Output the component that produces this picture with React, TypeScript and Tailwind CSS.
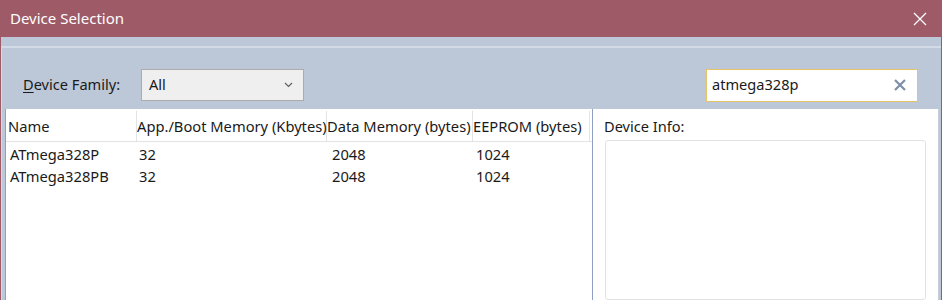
import React from "react";

const font = { fontFamily: '"Noto Sans", "Open Sans", sans-serif' };

export default function App() {
  return (
    <div className="w-[942px] h-[300px] overflow-hidden flex flex-col bg-[#9e5b67] text-[#1a1a1a]" style={font}>
      {/* title bar */}
      <div className="h-[37px] flex items-center justify-between pl-[10px] pr-[14px] shrink-0">
        <span className="text-[15px] text-white">Device Selection</span>
        <svg width="14" height="14" viewBox="0 0 14 14" className="mr-[1px]">
          <path d="M1 1 L13 13 M13 1 L1 13" stroke="#ffffff" strokeWidth="1.3" />
        </svg>
      </div>
      {/* body */}
      <div className="flex-1 mx-[1px] bg-[#bcc8d8] flex flex-col min-h-0">
        <div className="h-[9px] shrink-0" />
        <div className="h-[2px] shrink-0 bg-[#d3dbe6]" />
        <div className="flex-1 flex flex-col border-l border-l-[#d3dbe6] min-h-0">
          {/* toolbar */}
          <div className="h-[61px] flex items-center pl-[21px] pr-[23px] pt-[13px] shrink-0">
            <span className="text-[14.6px] w-[118px]">
              <span className="underline underline-offset-2">D</span>evice Family:
            </span>
            <div className="w-[163px] h-[32px] bg-[#efefef] border border-[#acacac] flex items-center justify-between pl-[7px] pr-[10px]">
              <span className="text-[14.6px]">All</span>
              <svg width="9" height="6" viewBox="0 0 9 6">
                <path d="M1 1 L4.5 4.5 L8 1" stroke="#606060" strokeWidth="1.2" fill="none" />
              </svg>
            </div>
            <div className="flex-1" />
            <div className="w-[212px] h-[33px] bg-white border border-[#e5c467] flex items-center justify-between pl-[5px] pr-[11px]">
              <span className="text-[14.6px]">atmega328p</span>
              <svg width="12" height="12" viewBox="0 0 12 12">
                <path d="M1 1 L11 11 M11 1 L1 11" stroke="#7d8fa6" strokeWidth="2.2" />
              </svg>
            </div>
          </div>
          {/* content */}
          <div className="flex-1 flex min-h-0 pl-[3px] pr-[2px]">
            <div className="w-[588px] bg-white border-l border-r border-[#8f9fc2] flex flex-col">
              <div className="h-[33px] flex border-b border-[#e3e3e3] text-[14.7px] shrink-0 pt-[2px]">
                <div className="w-[131px] border-r border-[#e3e3e3] flex items-center pl-[2px]">Name</div>
                <div className="w-[190px] border-r border-[#e3e3e3] flex items-center whitespace-nowrap">App./Boot Memory (Kbytes)</div>
                <div className="w-[146px] border-r border-[#e3e3e3] flex items-center whitespace-nowrap">Data Memory (bytes)</div>
                <div className="w-[117px] border-r border-[#e3e3e3] flex items-center whitespace-nowrap">EEPROM (bytes)</div>
              </div>
              <div className="pt-[1px] text-[14.7px]">
                {[
                  ["ATmega328P", "32", "2048", "1024"],
                  ["ATmega328PB", "32", "2048", "1024"],
                ].map((r) => (
                  <div key={r[0]} className="h-[22px] flex items-center">
                    <div className="w-[131px] pl-[4px]">{r[0]}</div>
                    <div className="w-[190px] pl-[2px]">{r[1]}</div>
                    <div className="w-[146px] pl-[5px]">{r[2]}</div>
                    <div className="w-[117px] pl-[3px]">{r[3]}</div>
                  </div>
                ))}
              </div>
            </div>
            <div className="flex-1 bg-white border-r border-[#c9ced6] flex flex-col pl-[11px] pr-[12px]">
              <div className="h-[31px] flex items-center text-[14.6px] pt-[4px]">Device Info:</div>
              <div className="flex-1 border border-[#e2e2e2] rounded-[3px] ml-[1px]" />
            </div>
          </div>
        </div>
      </div>
    </div>
  );
}
